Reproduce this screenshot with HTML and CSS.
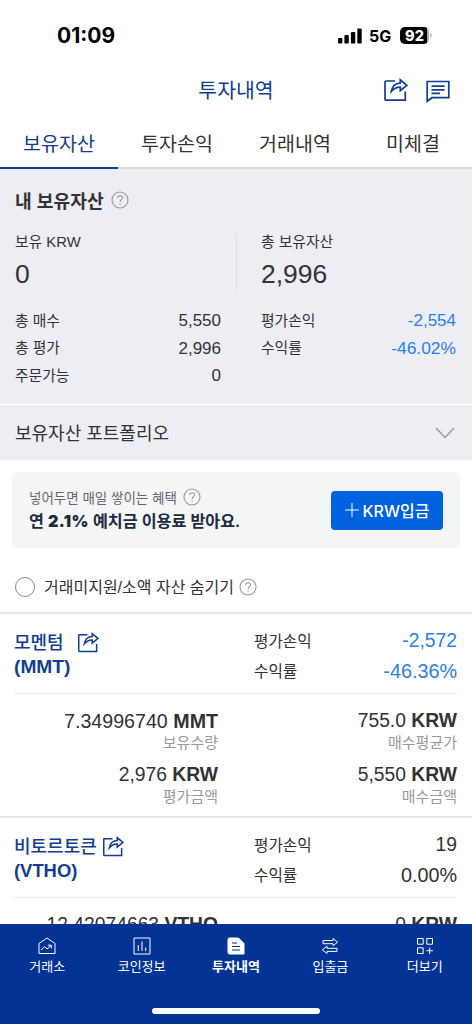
FILE: index.html
```html
<!DOCTYPE html>
<html lang="ko">
<head>
<meta charset="utf-8">
<title>투자내역</title>
<link rel="stylesheet" href="styles.css">
</head>
<body>
<svg class="defs" aria-hidden="true">
  <symbol id="share" viewBox="0 0 25 24">
    <path d="M12 3H2.800Q2 3 2 3.800V21.200Q2 22.200 3 22.200H22.300V13.500"/>
    <path d="M8.300 13.500C9.200 8.200 12.500 5.400 17.300 5.200V1.900L23.800 7.300 17.300 12.600V9.200C13.500 9 11 10.500 8.300 13.500Z"/>
  </symbol>
  <symbol id="help" viewBox="0 0 18 18">
    <circle cx="9" cy="9" r="8"/>
    <path d="M6.600 7.100C6.600 3.800 11.600 4 11.500 6.900C11.400 8.700 9.100 8.800 9.100 11M9.100 12.500V13.700"/>
  </symbol>
</svg>
<div class="app">
  <header class="status">
    <span class="clock">01:09</span>
    <svg class="signal" viewBox="0 0 24 16"><rect x="0" y="10" width="4.400" height="5.500" rx="1"/><rect x="6.400" y="7" width="4.400" height="8.500" rx="1"/><rect x="12.900" y="4" width="4.400" height="11.500" rx="1"/><rect x="19.300" y="0.500" width="4.400" height="15" rx="1"/></svg>
    <span class="network">5G</span>
    <span class="battery"><span class="level">92</span></span>
    <span class="battery-tip"></span>
  </header>
  <div class="titlebar">
    <h1>투자내역</h1>
    <div class="actions">
      <svg class="icon share-lg"><use href="#share"/></svg>
      <svg class="icon chat" viewBox="0 0 24 24"><path d="M1.200 2.500H22.800V18.700H6L1.200 22.300ZM5.500 7.200H18.500M5.500 10.800H18.500M5.500 14.400H14"/></svg>
    </div>
  </div>
  <nav class="tabs">
    <a class="tab active">보유자산</a><a class="tab">투자손익</a><a class="tab">거래내역</a><a class="tab">미체결</a>
  </nav>
  <section class="summary">
    <h2>내 보유자산 <svg class="help"><use href="#help"/></svg></h2>
    <div class="totals">
      <div class="total"><span>보유 KRW</span><strong>0</strong></div>
      <div class="total right"><span>총 보유자산</span><strong>2,996</strong></div>
    </div>
    <div class="stats">
      <dl><dt>총 매수</dt><dd>5,550</dd><dt>총 평가</dt><dd>2,996</dd><dt>주문가능</dt><dd>0</dd></dl>
      <dl class="blue"><dt>평가손익</dt><dd>-2,554</dd><dt>수익률</dt><dd class="percent">-46.02%</dd></dl>
    </div>
  </section>
  <section class="portfolio">
    <span>보유자산 포트폴리오</span>
    <svg class="chevron" viewBox="0 0 20 12"><path d="M1 1 10 10.500 19 1"/></svg>
  </section>
  <section class="promo">
    <div class="promo-copy">
      <p class="promo-sub">넣어두면 매일 쌓이는 혜택 <svg class="help"><use href="#help"/></svg></p>
      <p class="promo-main">연 <b>2.1%</b> 예치금 이용료 받아요.</p>
    </div>
    <button class="deposit"><svg class="plus" viewBox="0 0 14 14"><path d="M7 0V14M0 7H14"/></svg>KRW입금</button>
  </section>
  <label class="filter"><span class="radio"></span><span class="filter-text">거래미지원/소액 자산 숨기기</span><svg class="help"><use href="#help"/></svg></label>
  <main>
    <article class="asset">
      <div class="asset-head">
        <div class="name momentum"><span class="coin">모멘텀</span><svg class="icon share-sm"><use href="#share"/></svg><span class="code">(MMT)</span></div>
        <dl class="blue"><dt>평가손익</dt><dd>-2,572</dd><dt>수익률</dt><dd class="percent">-46.36%</dd></dl>
      </div>
      <div class="figures">
        <div class="figure wide"><p>7.34996740 <b>MMT</b></p><small>보유수량</small></div>
        <div class="figure"><p>755.0 <b>KRW</b></p><small>매수평균가</small></div>
        <div class="figure"><p>2,976 <b>KRW</b></p><small>평가금액</small></div>
        <div class="figure"><p>5,550 <b>KRW</b></p><small>매수금액</small></div>
      </div>
    </article>
    <article class="asset">
      <div class="asset-head">
        <div class="name"><span class="coin">비토르토큰</span><svg class="icon share-sm"><use href="#share"/></svg><span class="code long">(VTHO)</span></div>
        <dl><dt>평가손익</dt><dd>19</dd><dt>수익률</dt><dd class="percent">0.00%</dd></dl>
      </div>
      <div class="figures">
        <div class="figure"><p>12.42074663 <b>VTHO</b></p></div>
        <div class="figure"><p>0 <b>KRW</b></p></div>
      </div>
    </article>
  </main>
  <footer class="bottom">
    <nav class="menu">
      <a><svg viewBox="0 0 18 18"><path d="M1 6.500 9 1 17 6.500V16.500H1ZM3 13 6.700 9.700 9 12 13 8.500M10 8.200H13.300V11.500"/></svg>거래소</a>
      <a><svg viewBox="0 0 18 18"><path d="M1 1H17V17H1ZM5.300 8V14M9 4.500V14M12.700 10.500V14"/></svg>코인정보</a>
      <a class="current"><svg viewBox="0 0 18 18"><path class="fill" d="M2.500 1H11.500L17 6.500V17H2.500Q1 17 1 15.500V2.500Q1 1 2.500 1Z"/><path class="lines" d="M5 6H10M5 9.500H13M5 13H13"/></svg>투자내역</a>
      <a><svg viewBox="0 0 18 18"><path d="M2 3.600H12V1.500L16.700 5.200 12 8.700V6.700H2ZM16 11.300H6V9.200L1.300 12.900 6 16.500V14.400H16Z"/></svg>입출금</a>
      <a><svg viewBox="0 0 18 18"><path d="M1.500 1.500H7.200V7.200H1.500ZM10.800 1.500H16.500V7.200H10.800ZM1.500 10.800H7.200V16.500H1.500ZM13.700 10.500V17M10.500 13.700H17"/></svg>더보기</a>
    </nav>
    <span class="home-indicator"></span>
  </footer>
</div>
</body>
</html>
```
FILE: styles.css
```css
* { box-sizing: border-box; margin: 0; padding: 0; }
body { background: #fff; color: #333; font-family: "Liberation Sans", "Noto Sans CJK KR", sans-serif; }
.defs { display: none; }
.app { width: 472px; height: 1024px; overflow: hidden; display: flex; flex-direction: column; }
.app > * { flex-shrink: 0; }
svg { fill: none; stroke: currentColor; }

.status { height: 68px; padding: 3px 41px 0 57px; display: flex; align-items: center; color: #000; font-family: Inter, sans-serif; }
.clock { font-size: 21px; font-weight: 750; width: 281px; flex-shrink: 0; }
.signal { width: 24px; height: 16px; fill: #000; stroke: none; flex-shrink: 0; }
.network { width: 30px; padding-left: 7px; font-size: 16px; font-weight: 650; white-space: nowrap; flex-shrink: 0; }
.battery { width: 29px; height: 17px; margin-left: 8px; border-radius: 5px; background: linear-gradient(90deg, #000 93%, #aaa 93%); color: #fff; text-align: center; flex-shrink: 0; }
.level { display: block; font-size: 14.500px; line-height: 17px; font-weight: 800; }
.battery-tip { width: 2px; height: 5px; margin-left: 1px; border-radius: 0 2px 2px 0; background: #ccc; flex-shrink: 0; }

.titlebar { height: 46px; display: grid; grid-template-columns: 1fr auto 1fr; align-items: center; color: #123e91; }
.titlebar h1 { grid-column: 2; font-size: 20.500px; line-height: 30px; font-weight: 400; }
.actions { display: flex; justify-content: flex-end; gap: 18px; padding-right: 22px; }
.icon { stroke-width: 1.700; }
.share-lg { width: 25px; height: 24px; margin-top: -1px; }
.chat { width: 24px; height: 24px; }

.tabs { height: 55px; display: grid; grid-template-columns: repeat(4, 1fr); }
.tab { padding-top: 16px; border-bottom: 2px solid #dcdce0; font-size: 19.500px; line-height: 28px; text-align: center; }
.active { color: #123e91; border-color: #123e91; }

.summary { height: 236px; padding: 15px 16px 0 15px; background: #edeef4; border-bottom: 1px solid #fff; }
.summary h2 { display: flex; align-items: center; gap: 7px; height: 32px; font-size: 18.200px; font-weight: 700; }
.help { width: 18px; height: 18px; color: #999; stroke-width: 1.100; flex-shrink: 0; }
.totals { display: grid; grid-template-columns: 221px 1fr; height: 55px; margin-top: 18px; }
.total { display: flex; flex-direction: column; font-size: 14.800px; line-height: 16px; }
.total strong { font-size: 26.500px; font-weight: 400; line-height: 32px; margin-top: 8px; }
.right { padding-left: 24px; border-left: 1px solid #ddd; }
.stats { display: grid; grid-template-columns: 206px 195px; column-gap: 40px; align-items: start; margin-top: 18px; }
dl { display: grid; grid-template-columns: auto 1fr; grid-auto-rows: 27.700px; line-height: 27.700px; font-size: 14.800px; align-content: start; }
dd { text-align: right; font-size: 17px; }
.blue dd { color: #2680ed; }
.stats dt { padding-top: 0.600px; }
.stats .percent { font-size: 17.400px; }

.portfolio { height: 55px; padding: 0 17px 2px 15px; display: flex; align-items: center; justify-content: space-between; background: #edeef4; font-size: 18px; }
.chevron { width: 20px; height: 12px; margin-top: 2px; color: #999; stroke-width: 1.300; }
.promo { height: 76px; margin: 12px 12px 0; padding: 0 17px; border-radius: 5px; background: #f3f5f7; display: flex; align-items: center; justify-content: space-between; }
.promo-copy { padding-bottom: 3px; }
.promo-sub { display: flex; align-items: center; gap: 6px; height: 24px; font-size: 13.500px; color: #606773; }
.promo-main { font-family: Inter, "Noto Sans CJK KR", sans-serif; font-size: 16.200px; line-height: 24px; font-weight: 600; color: #202a3c; white-space: nowrap; }
.promo-main b { font-weight: 900; letter-spacing: 0.400px; }
.deposit { width: 112px; height: 39px; border: 0; border-radius: 4px; background: #0062df; color: #fff; display: flex; align-items: center; justify-content: center; gap: 4px; font-family: Inter, "Noto Sans CJK KR", sans-serif; font-size: 16px; font-weight: 500; white-space: nowrap; }
.plus { width: 14px; height: 14px; stroke-width: 1; }
.filter { height: 65px; padding: 13px 15px 0; display: flex; align-items: center; font-size: 16px; }
.radio { width: 20px; height: 20px; border: 1px solid #888; border-radius: 50%; }
.filter-text { margin: -2px 5px 0 9px; }

main { margin-top: -1px; }
.asset { height: 204px; border-top: 2px solid #e7e7e7; padding: 0 15px 0 14px; }
.asset-head { height: 80px; border-bottom: 1px solid #ececec; display: grid; grid-template-columns: 240px 1fr; }
.name { display: grid; grid-template-columns: auto auto; grid-auto-rows: 24px; justify-content: start; align-content: start; column-gap: 6px; padding-top: 17px; color: #123e91; font-size: 18px; font-weight: 500; line-height: 25px; }
.momentum { column-gap: 14px; }
.code { grid-column: 1 / -1; font-size: 19.200px; font-weight: 700; line-height: 23px; }
.long { font-size: 18.400px; }
.share-sm { width: 25px; height: 24px; transform: scale(0.880); transform-origin: 0 0; margin: 1px 0 0 -1px; }
.asset dl { padding-top: 12px; font-size: 15.700px; grid-auto-rows: 30px; line-height: 31px; }
.asset dd { font-size: 19.300px; line-height: 30px; }
.asset .percent { font-size: 19.800px; }
.figures { display: grid; grid-template-columns: 204px 1fr; grid-auto-rows: 54px; padding-top: 15px; }
.figure { text-align: right; }
.figure p { font-size: 19.300px; line-height: 24px; white-space: nowrap; }
.figure.wide p { font-size: 19.650px; }
.figure small { display: block; font-size: 15px; line-height: 20px; color: #999; }

.bottom { position: absolute; left: 0; top: 924px; width: 472px; height: 100px; background: #033495; color: #fff; }
.menu { height: 50px; display: grid; grid-template-columns: repeat(5, 1fr); padding-top: 13px; }
.menu a { display: flex; flex-direction: column; align-items: center; font-size: 13px; line-height: 20px; }
.menu svg { width: 18px; height: 18px; stroke-width: 1; margin-bottom: 2px; }
.menu .current { font-weight: 700; }
.fill { fill: #fff; }
.lines { stroke: #033495; stroke-width: 1.200; }
.home-indicator { display: block; width: 168px; height: 6px; margin: 34px auto 0; border-radius: 3px; background: #fff; }
```
